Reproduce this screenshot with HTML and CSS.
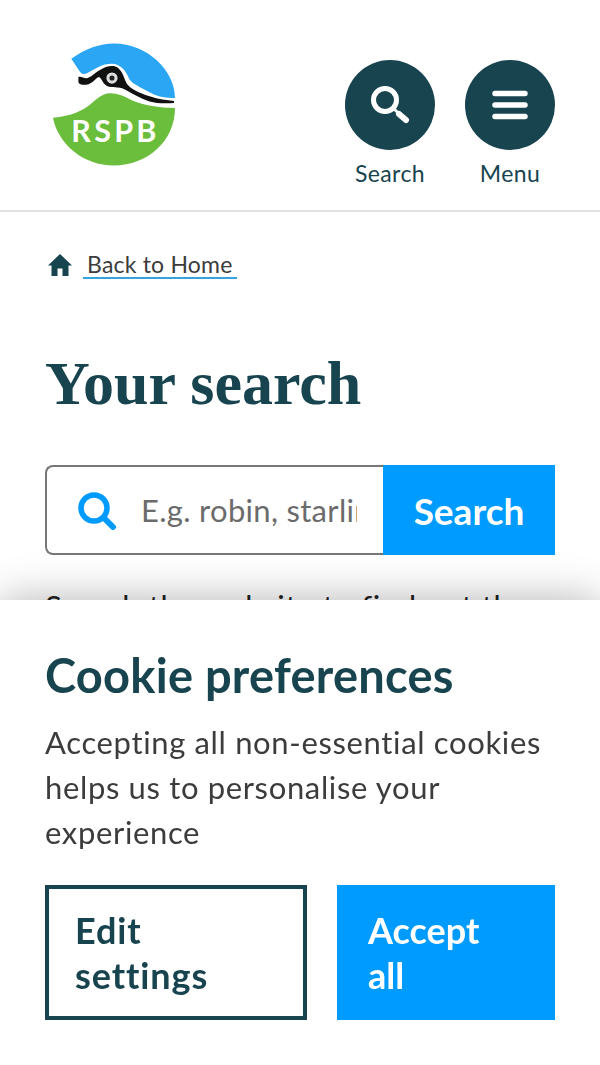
FILE: index.html
```html
<!DOCTYPE html>
<html lang="en">
<head>
  <meta charset="UTF-8">
  <meta name="viewport" content="width=device-width, initial-scale=1.0">
  <title>Your search | RSPB</title>
  <link rel="stylesheet" href="styles.css">
</head>
<body>
  <header class="header">
    <a class="logo" href="#">
      <svg width="122" height="123" viewBox="2 2 120 120">
        <path fill="#2ba6f5" d="M20 17C34 7 48 2 62 2c33 0 60 27 60 53.500C112 56 104 54 97 50C88 45 80 42 77 37C74 29 68 22 60 22C50 22 44 27 36 31C32 33 30 32 28 29Z"/>
        <path fill="#6bbd3c" d="M2 75C14 74 26 71 36 64C44 58 50 51 58 51C66 51 72 54 80 58C92 63 106 65 122 65.500C122 98 95 122 62 122C32 122 7 101 2 75Z"/>
        <path fill="#111" d="M27 35C30 34 33 37 36 36C41 34 45 29 50 27C55 24 62 23 66 26C71 30 72 37 75 42C79 47 86 50 97 54C106 57 114 58 121 58.500V60.500C112 61 104 61 97 59C88 56 78 50 70 46C64 44 58 46 54 43C50 40 50 36 47 35C43 37 41 41 37 42C33 43 28 43 27 40Z"/>
        <circle cx="60" cy="36" r="5.500" fill="#ddd"/>
        <circle cx="60" cy="36" r="2.500" fill="#222"/>
        <text class="logo-text" x="20" y="99">RSPB</text>
      </svg>
    </a>
    <nav class="nav">
      <a class="nav-item" href="#">
        <span class="nav-circle">
          <svg width="90" height="90" viewBox="0 0 90 90">
            <circle cx="40" cy="40" r="11.500" fill="none" stroke="#fff" stroke-width="5"/>
            <path d="M49 49L61 60" fill="none" stroke="#fff" stroke-width="3"/>
            <path d="M54 54L61 60" fill="none" stroke="#fff" stroke-width="6" stroke-linecap="round"/>
          </svg>
        </span>
        <span class="nav-label">Search</span>
      </a>
      <a class="nav-item" href="#">
        <span class="nav-circle">
          <svg width="90" height="90" viewBox="0 0 90 90">
            <path d="M30 33.500H60M30 45H60M30 56.500H60" fill="none" stroke="#fff" stroke-width="5.500" stroke-linecap="round"/>
          </svg>
        </span>
        <span class="nav-label">Menu</span>
      </a>
    </nav>
  </header>

  <main class="main">
    <div class="crumb">
      <svg width="26" height="24" viewBox="0 0 26 24">
        <path fill="#17444f" d="M13 1L1 12.500H4.500V23H10.500V15.500H15.500V23H21.500V12.500H25Z"/>
      </svg>
      <a class="crumb-link" href="#">Back to Home</a>
    </div>

    <h1 class="title">Your search</h1>

    <form class="search">
      <div class="search-field">
        <svg width="40" height="40" viewBox="0 0 40 40">
          <circle cx="17" cy="18" r="13" fill="none" stroke="#009bff" stroke-width="5.500"/>
          <path d="M27 28L36 37" fill="none" stroke="#009bff" stroke-width="6" stroke-linecap="round"/>
        </svg>
        <input class="search-input" type="text" placeholder="E.g. robin, starling">
      </div>
      <button class="search-btn" type="button">Search</button>
    </form>

    <p class="intro">Search the website to find out the</p>
  </main>

  <section class="cookie">
    <h2 class="cookie-title">Cookie preferences</h2>
    <p class="cookie-text">Accepting all non-essential cookies helps us to personalise your experience</p>
    <div class="cookie-btns">
      <button class="cookie-btn edit" type="button">Edit settings</button>
      <button class="cookie-btn accept" type="button">Accept all</button>
    </div>
  </section>
</body>
</html>
```

FILE: styles.css
```css
* {
  padding: 0;
  margin: 0;
  box-sizing: border-box;
}
html, body {
  height: 100%;
  overflow: hidden;
}
body {
  font-family: "Lato", "Liberation Sans", sans-serif;
  font-variant-ligatures: none;
  color: #3c3c3c;
  background: #fff;
}
a {
  color: inherit;
  text-decoration: none;
}
.header {
  display: flex;
  justify-content: space-between;
  height: 212px;
  padding: 43px 45px 0 53px;
  border-bottom: 2px solid #e2e2e2;
}
.logo {
  display: block;
  height: 123px;
}
.logo-text {
  font-size: 30px;
  font-weight: 700;
  letter-spacing: 3.200px;
  fill: #fff;
}
.nav {
  display: flex;
  gap: 30px;
  padding-top: 17px;
}
.nav-item {
  display: flex;
  flex-direction: column;
  align-items: center;
  width: 90px;
  color: #17444f;
}
.nav-circle {
  display: block;
  width: 90px;
  height: 90px;
  border-radius: 50%;
  background: #17444f;
}
.nav-label {
  margin-top: 9px;
  font-size: 23px;
  line-height: 28px;
  letter-spacing: .4px;
}
.main {
  padding: 39px 45px 0;
}
.crumb {
  display: flex;
  align-items: center;
  gap: 10px;
  height: 28px;
  padding-left: 2px;
}
.crumb-link {
  padding: 0 4px;
  font-size: 23px;
  line-height: 25px;
  letter-spacing: .2px;
  border-bottom: 2px solid #36a3de;
}
.title {
  margin-top: 66px;
  font-family: "Liberation Serif", serif;
  font-size: 62px;
  font-weight: 700;
  line-height: 76px;
  color: #17444f;
}
.search {
  display: flex;
  height: 90px;
  margin-top: 44px;
}
.search-field {
  display: flex;
  align-items: center;
  flex: 1;
  min-width: 0;
  gap: 24px;
  padding: 0 26px 0 30px;
  border: 2px solid #777;
  border-right: 0;
  border-radius: 8px 0 0 8px;
}
.search-field svg {
  flex: none;
}
.search-input {
  flex: 1;
  width: 0;
  border: 0;
  outline: 0;
  font-family: inherit;
  font-size: 31px;
  letter-spacing: .3px;
  color: #3c3c3c;
}
.search-input::placeholder {
  color: #6b6b6b;
  opacity: 1;
}
.search-btn {
  width: 172px;
  flex: none;
  border: 0;
  font-family: inherit;
  font-size: 37px;
  font-weight: 700;
  color: #fff;
  background: #009bff;
}
.intro {
  margin-top: 29px;
  font-size: 31px;
  line-height: 45px;
  letter-spacing: .65px;
  color: #222;
  white-space: nowrap;
}
.cookie {
  position: fixed;
  left: 0;
  right: 0;
  bottom: 0;
  height: 465px;
  padding: 45px 45px 0;
  background: #fff;
  box-shadow: 0 0 40px rgba(0, 0, 0, .3);
}
.cookie-title {
  font-size: 47px;
  font-weight: 700;
  line-height: 60px;
  letter-spacing: .25px;
  color: #17444f;
}
.cookie-text {
  margin-top: 15px;
  font-size: 31px;
  line-height: 45px;
  letter-spacing: .65px;
}
.cookie-btns {
  display: flex;
  gap: 30px;
  margin-top: 30px;
}
.cookie-btn {
  height: 135px;
  border: 4px solid #17444f;
  font-family: inherit;
  font-size: 36px;
  font-weight: 700;
  line-height: 45px;
  text-align: left;
  color: #17444f;
  background: #fff;
}
.cookie-btn.edit {
  width: 262px;
  padding: 0 60px 0 26px;
  letter-spacing: .9px;
}
.cookie-btn.accept {
  width: 218px;
  padding: 0 31px;
  border: 0;
  color: #fff;
  background: #009bff;
}
```
